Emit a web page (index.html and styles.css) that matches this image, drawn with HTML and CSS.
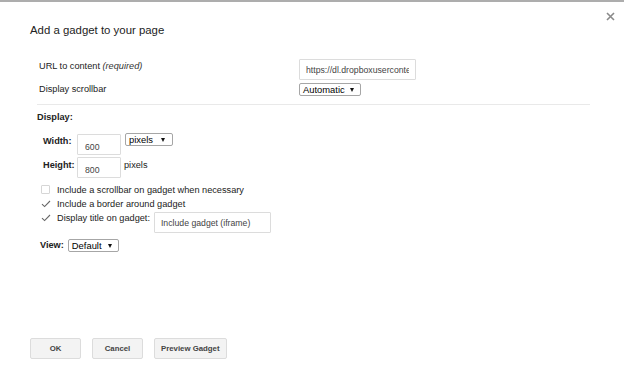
FILE: index.html
```html
<!DOCTYPE html>
<html lang="en">
<head>
  <meta charset="UTF-8" />
  <title>Add a gadget to your page</title>
  <link rel="stylesheet" href="styles.css">
</head>
<body>
  <div class="dialog">
    <div class="header">
      <h1>Add a gadget to your page</h1>
      <button class="close" aria-label="Close">
        <svg width="9" height="9" viewBox="0 0 9 9"><path d="M1 1 L8 8 M8 1 L1 8" stroke="#8a8a8a" stroke-width="1.6" fill="none"/></svg>
      </button>
    </div>

    <!-- Source -->
    <div class="source">
      <div class="field-row row-url">
        <label class="field-label">URL to content <em>(required)</em></label>
        <input class="text-input url-input" type="text" value="https://dl.dropboxusercontent.com/s/gadget.xml" />
      </div>
      <div class="field-row row-scroll">
        <label class="field-label">Display scrollbar</label>
        <div class="select select-auto"><span>Automatic</span><i class="arrow"></i></div>
      </div>
    </div>

    <div class="divider"></div>

    <!-- Display options -->
    <div class="display">
      <div class="section-title">Display:</div>

      <div class="size-row row-width">
        <label class="size-label">Width:</label>
        <input class="text-input size-input" type="text" value="600" />
        <div class="select select-px"><span>pixels</span><i class="arrow"></i></div>
      </div>
      <div class="size-row row-height">
        <label class="size-label">Height:</label>
        <input class="text-input size-input" type="text" value="800" />
        <span class="unit">pixels</span>
      </div>

      <div class="check-row">
        <span class="checkbox"></span>
        <span>Include a scrollbar on gadget when necessary</span>
      </div>
      <div class="check-row">
        <span class="checkbox checked"><svg width="10" height="8" viewBox="0 0 10 8"><path d="M1 4.2 L3.6 6.6 L9 1" stroke="#666" stroke-width="1.1" fill="none"/></svg></span>
        <span>Include a border around gadget</span>
      </div>
      <div class="check-row row-title">
        <span class="checkbox checked"><svg width="10" height="8" viewBox="0 0 10 8"><path d="M1 4.2 L3.6 6.6 L9 1" stroke="#666" stroke-width="1.1" fill="none"/></svg></span>
        <span>Display title on gadget:</span>
        <input class="text-input title-input" type="text" value="Include gadget (iframe)" />
      </div>

      <div class="view-row">
        <label class="size-label">View:</label>
        <div class="select select-view"><span>Default</span><i class="arrow"></i></div>
      </div>
    </div>

    <div class="footer">
      <button class="btn btn-ok">OK</button>
      <button class="btn btn-cancel">Cancel</button>
      <button class="btn">Preview Gadget</button>
    </div>
  </div>
</body>
</html>
```

FILE: styles.css
```css
* {
  box-sizing: border-box;
}

body {
  margin: 0;
  font-family: "Liberation Sans", Arial, sans-serif;
  font-size: 9.2px;
  line-height: 14px;
  color: #222;
  background: #fff;
}

.dialog {
  min-height: 100vh;
  border-top: 2px solid #adadad;
  padding: 0 9px 0 30px;
  display: flex;
  flex-direction: column;
}

.header {
  display: flex;
  justify-content: space-between;
  align-items: flex-start;
  padding-top: 10px;
}

h1 {
  margin: 11px 0 0;
  font-size: 11.4px;
  line-height: 14px;
  font-weight: normal;
  color: #222;
}

.close {
  border: none;
  background: none;
  padding: 0;
  width: 9px;
  height: 9px;
  cursor: pointer;
}

.close svg {
  display: block;
}

/* Top fields */
.source {
  margin-top: 20px;
  padding-left: 9px;
}

.field-row {
  display: flex;
  align-items: flex-start;
}

.field-label {
  width: 260px;
  flex: none;
  padding-top: 2px;
}

.field-label em {
  color: #333;
}

.text-input {
  border: 1px solid #dcdcdc;
  border-radius: 1px;
  height: 21px;
  padding: 0 6px;
  font-family: "Liberation Sans", Arial, sans-serif;
  font-size: 8.7px;
  color: #444;
  background: #fff;
  outline: none;
}

.url-input {
  width: 117px;
  margin-top: 2px;
}

.row-scroll .select {
  margin-top: 3px;
}

.select {
  display: flex;
  align-items: center;
  justify-content: space-between;
  height: 13px;
  border: 1px solid #a6a6a6;
  border-radius: 2px;
  padding: 0 6px 0 3px;
  font-size: 9.4px;
  line-height: 11px;
  color: #000;
  background: #fff;
}

.select .arrow {
  width: 0;
  height: 0;
  border-left: 2.5px solid transparent;
  border-right: 2.5px solid transparent;
  border-top: 4px solid #111;
}

.select-auto {
  width: 62px;
}

.select-px {
  width: 48px;
  margin-left: 4px;
  margin-top: 1px;
  padding-right: 7px;
}

.select-view {
  width: 51px;
}

.divider {
  margin: 8px 25px 0 7px;
  height: 1px;
  background: #e9e9e9;
}

/* Display section */
.display {
  padding-left: 7px;
}

.section-title {
  margin-top: 5px;
  font-weight: bold;
}

.size-row {
  display: flex;
  align-items: flex-start;
  padding-left: 6px;
}

.row-width {
  margin-top: 8px;
}

.size-label {
  font-weight: bold;
  width: 34px;
  flex: none;
  padding-top: 2px;
}

.row-height .size-label,
.row-height .unit {
  padding-top: 3px;
}

.size-input {
  width: 44px;
  margin-top: 2px;
  padding: 5px 0 0 7px;
}

.unit {
  margin-left: 3px;
}

.check-row {
  display: flex;
  align-items: flex-start;
  padding-left: 4px;
}

.row-height + .check-row {
  margin-top: 5px;
}

.checkbox {
  width: 9px;
  height: 9px;
  margin: 2px 7px 0 0;
  flex: none;
  border: 1px solid #d6d6d6;
  border-radius: 1px;
}

.checkbox.checked {
  border: none;
  margin-top: 3px;
}

.checkbox svg {
  display: block;
}

.title-input {
  width: 117px;
  margin: 1px 0 0 4px;
}

.view-row {
  display: flex;
  align-items: flex-start;
  margin-top: 3px;
  padding-left: 3px;
}

.view-row .size-label {
  width: auto;
  margin-right: 4px;
}

.view-row .select {
  margin-top: 3px;
}

/* Buttons */
.footer {
  margin-top: auto;
  padding-bottom: 20px;
  display: flex;
  gap: 11px;
}

.btn {
  height: 21px;
  min-width: 51px;
  padding: 0 6px;
  border: 1px solid #dcdcdc;
  border-radius: 2px;
  background: #f3f3f3;
  font-family: "Liberation Sans", Arial, sans-serif;
  font-size: 7.8px;
  font-weight: bold;
  color: #444;
  cursor: pointer;
}
```
